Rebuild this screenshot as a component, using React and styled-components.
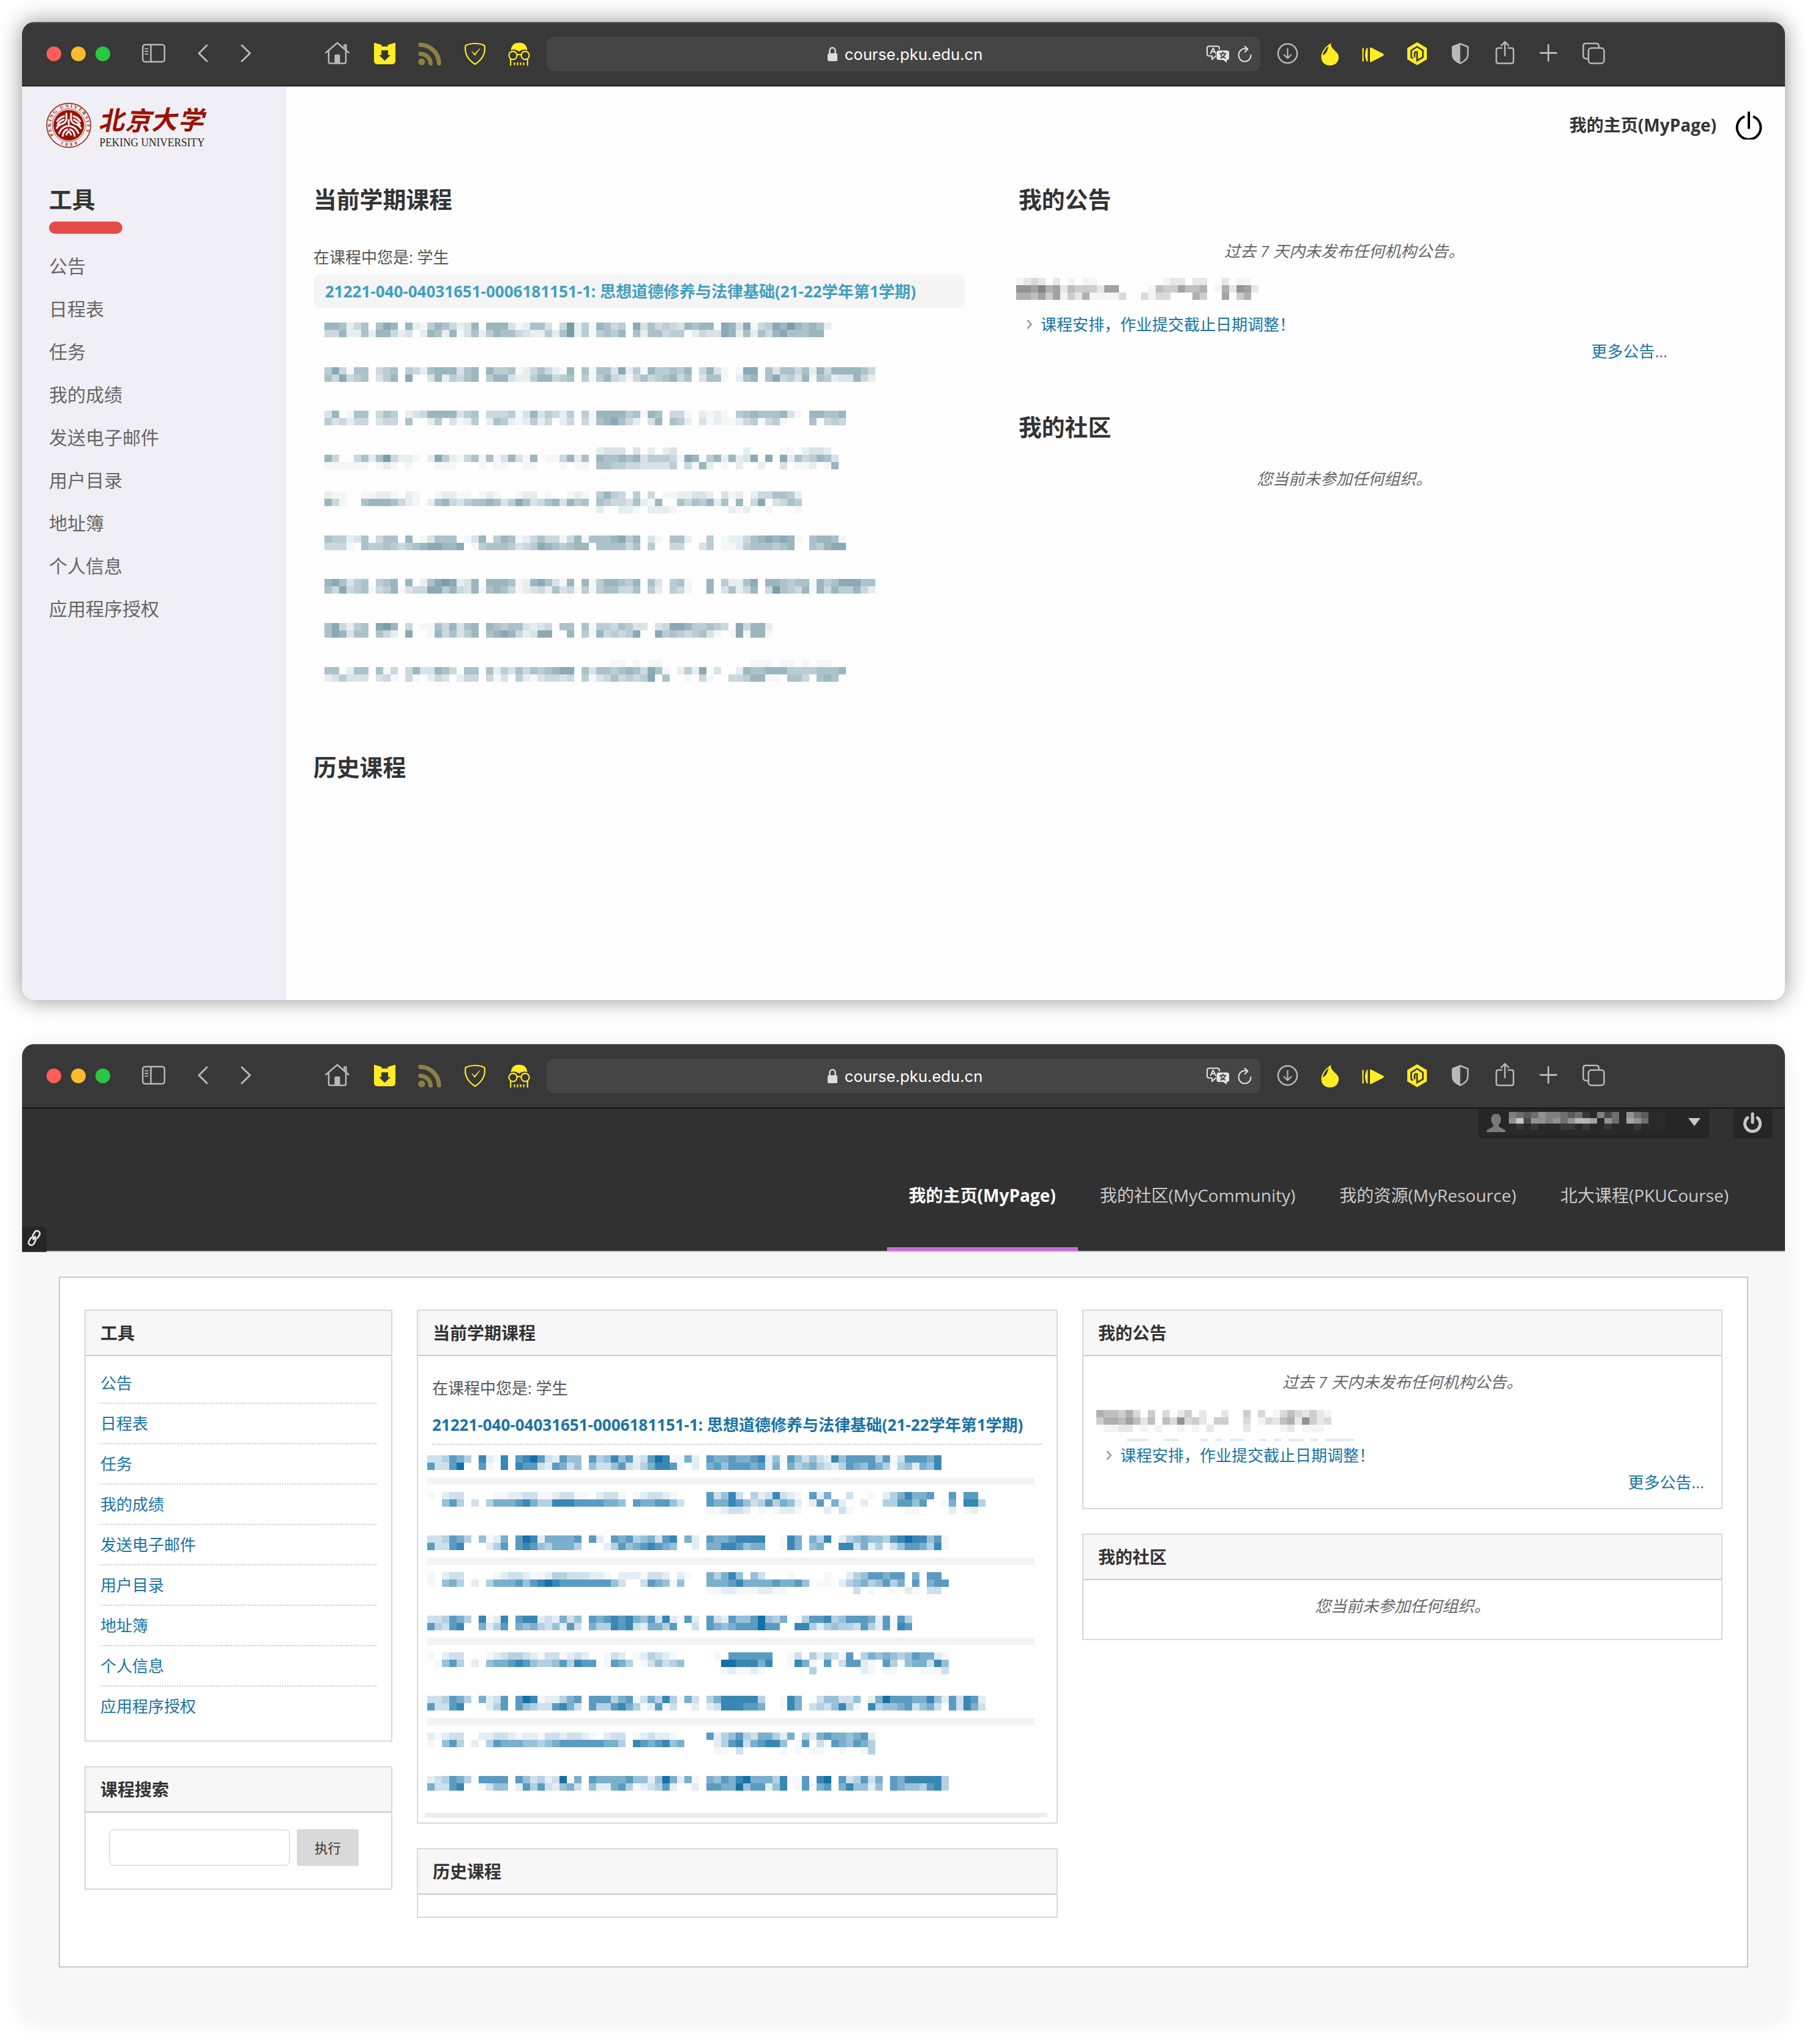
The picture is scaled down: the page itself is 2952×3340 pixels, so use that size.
import React from "react";
import styled, { createGlobalStyle, css } from "styled-components";

const SANS = `"Open Sans", "Noto Sans CJK SC", sans-serif`;

const GlobalStyle = createGlobalStyle`
  *, *::before, *::after { box-sizing: border-box; }
  body { margin: 0; background: #fff; font-family: ${SANS}; font-size: 26px; color: #555; }
  h1, h2, ul, p { margin: 0; padding: 0; }
  ul { list-style: none; }
  a { text-decoration: none; color: inherit; }
`;

/* ---------- windows ---------- */

const Desktop = styled.main`
  width: 2952px;
  height: 3340px;
  padding: 36px;
  display: flex;
  flex-direction: column;
  gap: 72px;
  overflow: hidden;
`;

const Window = styled.section`
  width: 2880px;
  height: 1598px;
  flex: none;
  display: flex;
  flex-direction: column;
  border-radius: 20px;
  overflow: hidden;
  background: ${(p) => p.$bg};
  box-shadow: 0 0 36px rgba(0, 0, 0, ${(p) => p.$shade});
`;

const Toolbar = styled.header`
  height: 106px;
  flex: none;
  display: flex;
  align-items: center;
  padding: 0 0 1px 40px;
  background: #383838;
  color: #b9b9b9;
  box-shadow: inset 0 2px 0 #505050;
  border-bottom: 1px solid ${(p) => p.$line};
  position: relative;
  &::after {
    content: "";
    position: absolute;
    left: 0;
    right: 0;
    bottom: 0;
    height: 1px;
    background: #000;
  }
`;

const Lights = styled.div`
  display: flex;
  gap: 16px;
`;

const Light = styled.span`
  width: 24px;
  height: 24px;
  border-radius: 50%;
  background: ${(p) => p.$color};
`;

const IconBox = styled.svg`
  display: block;
  flex: none;
  height: 48px;
  width: ${(p) => p.$w}px;
  margin-left: ${(p) => p.$gap || 0}px;
  fill: none;
  stroke: currentColor;
  stroke-width: 2.5;
  stroke-linecap: round;
  stroke-linejoin: round;
  overflow: visible;
`;

const AddressBar = styled.div`
  margin-left: 27px;
  width: 1166px;
  height: 56px;
  border-radius: 12px;
  background: #454545;
  color: #e6e6e6;
  display: grid;
  grid-template-columns: 1fr auto 1fr;
  align-items: center;
`;

const Address = styled.div`
  grid-column: 2;
  display: flex;
  align-items: center;
  gap: 11px;
  padding: 2px 0 0 4px;
  font: 400 25.6px/40px Inter, sans-serif;
  color: #fff;
`;

const AddressTools = styled.div`
  display: flex;
  justify-content: flex-end;
  padding-right: 14px;
`;

const Icon = ({ w, gap, children }) => (
  <IconBox $w={w} $gap={gap} viewBox={`0 0 ${w} 48`}>{children}</IconBox>
);

const YELLOW = "#ffec24";

const BrowserBar = ({ line }) => (
  <Toolbar $line={line}>
    <Lights>
      <Light $color="#ff5f57" />
      <Light $color="#febb2e" />
      <Light $color="#28c840" />
    </Lights>
    <Icon w={38} gap={52}>
      <rect x="1.2" y="9" width="35.6" height="28" rx="4" />
      <path d="M14.5 9V37" />
      <path d="M5 15.7h4.6M5 20h4.6M5 24.4h4.6" strokeWidth="1.8" />
    </Icon>
    <Icon w={17} gap={53}><path d="M15 10 2 23 15 36" strokeWidth="3" /></Icon>
    <Icon w={18} gap={53}><path d="M2 10 15.5 23 2 36" strokeWidth="3" /></Icon>
    <Icon w={40} gap={120}>
      <path d="M1.5 22 20 6 38.5 22" />
      <path d="M6 19v18q0 2.4 2.4 2.4h23.2q2.4 0 2.4-2.4V19" />
      <path d="M31.5 15V9.8h3V19" />
      <path d="M15.5 39V27q0-2 2-2h5q2 0 2 2v12z" fill="currentColor" stroke="none" />
    </Icon>
    <Icon w={35} gap={40}>
      <path fillRule="evenodd" fill={YELLOW} stroke="none" d="M0 5.7 12.5 9.3V12H22.5V9.3L35 5.7V35q0 6-6 6H6q-6 0-6-6zM12 18.3v7.7H8L17.5 35.3 27 26h-4V18.3z" />
    </Icon>
    <Icon w={38} gap={37}>
      <g stroke="#8a8145" strokeWidth="7">
        <path d="M3.8 24A17 17 0 0 1 20.5 39.5" />
        <path d="M3.8 9.3A31 31 0 0 1 34.2 39.5" />
      </g>
      <circle cx="5.8" cy="37" r="5.6" fill="#8a8145" stroke="none" />
    </Icon>
    <Icon w={36} gap={37}>
      <g stroke={YELLOW} strokeWidth="2.2">
        <path d="M18 7Q9 7 2.5 10.5Q-.5 29 18 41Q36.5 29 33.5 10.5Q27 7 18 7z" />
        <path d="m13 20.5 4.6 6L26 15.5l-8.4 8.4z" fill={YELLOW} strokeWidth="1" />
      </g>
    </Icon>
    <Icon w={36} gap={36}>
      <g stroke={YELLOW} strokeWidth="2.2">
        <path d="M4.5 18Q6 5.7 18 5.7T31.5 18Q25 15.5 18 20 11 15.5 4.5 18z" fill={YELLOW} stroke="none" />
        <circle cx="8" cy="26.5" r="6.6" />
        <circle cx="28" cy="26.5" r="6.6" />
        <path d="M14.5 26q3.5-2 7 0M4.2 33v9.5M31.8 33v9.5" />
        <path d="M10.5 38v4.5M15.5 38v4.5M20.5 38v4.5M25.5 38v4.5" strokeLinecap="butt" />
      </g>
    </Icon>
    <AddressBar>
      <Address>
        <IconBox $w={18} viewBox="0 0 18 48">
          <rect x="1" y="22" width="16" height="13" rx="2.5" fill="#dcdcdc" stroke="none" />
          <path d="M4.5 22V17.5a4.5 4.5 0 0 1 9 0V22" stroke="#dcdcdc" />
        </IconBox>
        <span>course.pku.edu.cn</span>
      </Address>
      <AddressTools>
        <Icon w={38}>
          <path d="M15 27.5 9 33v-5.5H4.5Q1 27.5 1 24V15q0-3.5 3.5-3.5h13Q21 11.5 21 15v1" strokeWidth="2" />
          <path d="M6.5 23.5 10.8 14.5 15 23.5M8 20.5h5.5" strokeWidth="1.8" />
          <path d="M20 18.5h13.5q3.5 0 3.5 3.5v8.5q0 3.5-3.5 3.5H33v4.5L27.5 34H20q-3.5 0-3.5-3.5V22q0-3.5 3.5-3.5z" fill="currentColor" stroke="none" />
          <path d="M22 23.5h9.5M26.7 21.3v2M23.5 25.2q2 4.5 7 5.5M30 25.2q-2 4.5-7 5.5" stroke="#454545" strokeWidth="1.9" />
        </Icon>
        <Icon w={22} gap={14}>
          <path d="M12.5 15.8A10 10.5 0 1 0 20.5 26M10.5 11.7l4.8 4.5-4.5 4.6" strokeWidth="2" />
        </Icon>
      </AddressTools>
    </AddressBar>
    <Icon w={35} gap={27}>
      <circle cx="17.5" cy="23.3" r="15.6" />
      <path d="M17.5 15.5v15.5M11.8 25.5l5.7 5.7 5.7-5.7" strokeWidth="2.2" />
    </Icon>
    <Icon w={30} gap={37}>
      <path d="M16.3 5.5C14 10 .5 16 .5 29.5.5 38 7 43 14.8 43S29 38 29 29C29 19.5 14.5 17 16.3 5.5z" fill={YELLOW} stroke="none" />
      <path d="M14 9C7 14 2.5 20 1.8 27.5q5-1 8-6 2.5-5 4.2-12.5z" fill="#383838" stroke={YELLOW} strokeWidth="1.6" />
    </Icon>
    <Icon w={37} gap={37}>
      <path d="M.5 14.5h2.5q-1 11 0 22H.5zM9.5 14.5v22H7.5Q2.5 25.500 7.5 14.5zM13 14q1-1 2.5 0L35 24q1.8 1.5 0 3L15.5 37q-1.5 1-2.5 0z" fill={YELLOW} stroke="none" />
    </Icon>
    <Icon w={34} gap={36}>
      <path d="M17 5 33 14.5v18.5L17 42.5 1 33V14.5z" fill={YELLOW} stroke="none" />
      <path d="M10.5 31.5 7.5 29.5V18.5L17 12.5l9.5 6v11L17 35V21q-4-1-4 2.5v6" stroke="#383838" strokeWidth="2.6" strokeLinecap="butt" strokeLinejoin="miter" />
    </Icon>
    <Icon w={29} gap={39}>
      <path d="M14.5 7.5 27 12.5V25q0 9-12.5 14.5Q2 34 2 25V12.5z" />
      <path d="M14.5 6.5v34Q1 35 1 25V12z" fill="currentColor" stroke="none" />
    </Icon>
    <Icon w={31} gap={43}>
      <path d="M10 14.5H4.5q-3 0-3 3v19q0 3 3 3h22q3 0 3-3v-19q0-3-3-3H21" />
      <path d="M15.5 27V4.5M9.5 10.3l6-6 6 6" />
    </Icon>
    <Icon w={29} gap={41}><path d="M1.5 22.5h26M14.5 9.5v26" strokeWidth="2.8" /></Icon>
    <Icon w={37} gap={41}>
      <path d="M8 32H5.5q-4-1-4-5V11q0-4 4-4h17q4 0 4.5 4v2" />
      <rect x="10" y="14.5" width="25.5" height="25" rx="4.5" />
    </Icon>
  </Toolbar>
);

/* ---------- pixelated, censored text ---------- */

const PALETTES = {
  teal: { dark: [122, 157, 170], light: [255, 255, 255], gamma: 1.15 },
  blue: { dark: [20, 113, 168], light: [255, 255, 255], gamma: 1.4 },
  gray: { dark: [132, 132, 132], light: [255, 255, 255], gamma: 1.1 },
  night: { dark: [200, 200, 200], light: [38, 38, 38], gamma: 1 },
};

const MosaicSvg = styled.svg`
  display: block;
  flex: none;
  margin-top: ${(p) => p.$top || 0}px;
  margin-left: ${(p) => p.$left || 0}px;
  shape-rendering: crispEdges;
`;

const Mosaic = ({ rows, tone, top, left, size = 12 }) => {
  const { dark, light, gamma } = PALETTES[tone];
  const cols = Math.max(...rows.map((r) => r.length));
  const mix = (v) => dark.map((d, i) => Math.round(light[i] + (d - light[i]) * Math.pow(v / 9, gamma))).join(",");
  return (
    <MosaicSvg $top={top} $left={left} width={cols * 12} height={rows.length * size}>
      {rows.flatMap((row, y) =>
        [...row].map((c, x) =>
          c > "0" ? <rect key={`${x}-${y}`} x={x * 12} y={y * size} width="12" height={size} fill={`rgb(${mix(+c)})`} /> : null
        )
      )}
    </MosaicSvg>
  );
};

/* Each row is "course id | course name"; the name starts at a fixed column. */
const joinRows = (nameColumn, length, rows) =>
  rows.map((row) => {
    const [id, name] = row.split("|");
    return (id.padEnd(nameColumn, "0").slice(0, nameColumn) + name).slice(0, length);
  });

const TEAL_LINES = [
  [527, 69, [
    "7762460687072157642370777312663049251|76450836454376770873814587976762",
    "4472262774230276271362576643225269251|56570626645502433872626478666770",
  ]],
  [600, 75, [
    "5841660456054267773670755612464217061|66382517556570473101880636646274777764",
    "6484560357080037254670577322577456051|57431464567460366102670684537165233742",
  ]],
  [671, 71, [
    "3701660465023477773560444513735425051|7777561760441021210567666731077667",
    "5342440344060025031250265212524024041|6786420370652031211245145100060454",
  ]],
  [731, 70, [
    "0|23330302023000000000200001102332",
    "7400462694221028521461613731701147260|766767355541870572723808082645763",
    "1111110121010001110001011001100010110|665544333350417201020020030112017",
  ]],
  [803, 65, [
    "2110011221021001221101210012201001210|5754050401122332031202446652",
    "7410067776421026743566763586346737560|6544362170064657260704803465657",
    "0|2002210222100000002120010001134",
  ]],
  [875, 71, [
    "6552360466070136660137057612464414716|6678570310662005012246787871067761",
    "4441065565456788778015666534587656770|6666460500440035011256665670065788",
  ]],
  [946, 75, [
    "7863560567070268982370777612786317071|57765706305610070522680776566175688866",
    "6484561457134488574371676412342634151|56644605205410070362470496547174755742",
  ]],
  [1018, 61, [
    "6842560897040116473670765663234066061|554653303488755654084772",
    "6873660642080017463570678742388007051|745458008565456310181771",
  ]],
  [1078, 71, [
    "0|0011010110000000000001110110101100",
    "6602660614047337640660625364656788063|6656764861025280300276677755556667",
    "2353330341041024302440413052134434051|3464545806001041004457711066406760",
  ]],
].map(([y, length, rows]) => ({ y, rows: joinRows(37, length, rows) }));

const BLUE_EVEN = [
  [70, [
    "33476408218078973275507458572379811620|76676678251753532857777471377768",
    "73379007108087732763505335732468871020|67577767260645643247657641452658",
  ]],
  [71, [
    "33476405126079826666707207674563780620|766788880018606480245655478988571",
    "73378000247078754666400024756787650020|668875660018605600883624135776481",
  ]],
  [66, [
    "33476408128078823263507678786573821720|7327557954601477845777627174",
    "74378006247065643527306448783266470030|7656777977008842454437427187",
  ]],
  [76, [
    "33476406237079812246707774671364841630|46888884001860035533502697776685273872",
    "73378000247075433786307447864127130020|23888776001860343584108455673563073863",
  ]],
  [71, [
    "23476407777075342391607666675525962610|657689666481170890734736076888884",
    "63378001355027473256305226741234720020|776695772580171670685525076554784",
  ]],
].map(([length, rows]) => joinRows(38, length, rows));

const BLUE_ODD = [
  [76, [
    "1023300001122331123311023310123321|73583042383210726003001024686670070770",
    "0057403046667864488877776650766775300|76687534746520270620020044775700160884",
    "0|11233201012210002031000000011000020120",
  ]],
  [71, [
    "1023300001233211244333221022213320210|646850530001000010024577677060770",
    "1056402046667578987777777530037651500|666786666766750110245645746070677",
    "0|112211122110000000003010010210330",
  ]],
  [71, [
    "1023300012344321331232001320124321000|010777777001304243170465654576621",
    "0157402056678754457487701764013534500|009988868001861070377210741566385",
    "0|001211210000004000000210110001113",
  ]],
  [61, [
    "2123300223321221332332102330123221000|72457436642604267665672",
    "1057402047666554567777776640876785600|02478367885017031765764",
    "0|01103000001010110010014",
  ]],
].map(([length, rows]) => joinRows(38, length, rows));

const NOTICE_TOP = [
  "123202010110000000001220220020110",
  "887967254442770000154475560162872",
  "665747142611113003133000640070460",
];
const NOTICE_BOTTOM = [
  "65546304030240200200403013532421",
  "46657525053834204400301325628423",
  "01122010100101020000200001201110",
];

/* ---------- crest ---------- */

const LogoLink = styled.a`
  display: block;
  width: 262px;
  height: 76px;
  margin-left: 39px;
  color: #9b1100;
`;

const LogoSvg = styled.svg`
  display: block;
  fill: none;
  stroke: currentColor;
  overflow: visible;
`;

const LogoText = styled.text`
  stroke: none;
  fill: ${(p) => p.$fill || "#9b1100"};
  font-family: "Liberation Serif", "Noto Sans CJK SC", serif;
  font-size: ${(p) => p.$size}px;
  font-weight: ${(p) => p.$weight || 400};
`;

const PkuLogo = () => (
  <LogoLink href="#">
    <LogoSvg width="262" height="76" viewBox="0 0 262 76">
      <circle cx="37.3" cy="37.7" r="36" strokeWidth="1.4" />
      <circle cx="37.3" cy="37.7" r="27" strokeWidth=".8" />
      <circle cx="37.3" cy="37.7" r="25" fill="currentColor" stroke="none" />
      <g stroke="#f0eff5" strokeWidth="3" strokeLinecap="round" strokeLinejoin="round">
        <path d="M33.5 18.5v9Q33.5 34 24 36.5 20 38 17.5 42.5M41 18.5v9Q41 34 50.5 36.5 54.5 38 57 42.5" />
        <path d="M37.3 29v10" />
        <path d="M29.5 23Q22 25 18.5 31M45 23Q52.5 25 56 31" />
        <path d="M29 28.5Q23 30.5 19 36.5M45.5 28.5Q51.5 30.5 55.5 36.5" />
        <path d="M34.5 39Q25 41 21.5 50.5M40 39Q49.5 41 53 50.5" />
        <path d="M35 44.5Q28.5 46.5 27.5 55M39.5 44.5Q46 46.5 47 55" />
        <path d="M37.3 47.5Q34.5 50 33.5 53M37.3 47.5Q40 50 41 53" />
      </g>
      <path id="crest-top" d="M14.5 56.5A29.5 29.5 0 1 1 60.5 56.5" stroke="none" />
      <path id="crest-foot" d="M20 66.5Q37.5 77 55 66.5" stroke="none" />
      <LogoText $size={7.8} $weight={700}>
        <textPath href="#crest-top" startOffset="3" textLength="120">PEKING UNIVERSITY</textPath>
      </LogoText>
      <LogoText $size={7.5} $weight={700}>
        <textPath href="#crest-foot" startOffset="4" textLength="29">1898</textPath>
      </LogoText>
      <g transform="translate(86 45) skewX(-14)">
        <LogoText $size={42} $weight={700} x="0 43 86 129" y="1 0 0 -1" rotate="-3 2 -3 2">北京大学</LogoText>
      </g>
      <LogoText $size={18.5} $fill="#2c2220" x="87.5" y="71.5" textLength="172" lengthAdjust="spacingAndGlyphs">PEKING UNIVERSITY</LogoText>
    </LogoSvg>
  </LogoLink>
);

/* ---------- first window: refreshed portal ---------- */

const Portal = styled.div`
  flex: 1;
  display: grid;
  grid-template-columns: 432px 1fr;
`;

const Side = styled.aside`
  background: #f0eff5;
  padding-top: 25px;
`;

const BigTitle = styled.h2`
  font-size: 37.8px;
  line-height: 52px;
  height: 52px;
  font-weight: 700;
  color: #333;
  margin-top: ${(p) => p.$top || 0}px;
`;

const ToolNav = styled.nav`
  padding: 57px 44px 0;
`;

const RedBar = styled.div`
  width: 120px;
  height: 20px;
  margin: 10px 0 18px;
  border-radius: 10px;
  background: #e54c47;
`;

const ToolLink = styled.a`
  display: block;
  font-size: 30px;
  line-height: 70px;
  height: 70px;
  color: #666;
`;

const PortalMain = styled.div`
  padding: 41px 37px 0 44px;
  display: flex;
  flex-direction: column;
`;

const PortalTop = styled.div`
  height: 44px;
  display: flex;
  justify-content: flex-end;
  align-items: center;
  gap: 31px;
`;

const HomeLink = styled.a`
  font-size: 28px;
  line-height: 42px;
  height: 44px;
  font-weight: 700;
  color: #333;
`;

const PowerSvg = styled.svg`
  display: block;
  fill: none;
  stroke-linecap: round;
`;

const PortalColumns = styled.div`
  display: grid;
  grid-template-columns: 1064px 1064px;
  gap: 88px;
  padding-top: 73px;
`;

const Plain = styled.p`
  height: 40px;
  line-height: 40px;
  color: #555;
  margin-top: ${(p) => p.$top || 0}px;
`;

const Muted = styled(Plain)`
  font-style: italic;
  text-align: center;
  color: #666;
`;

const CoursePill = styled.a`
  display: block;
  height: 56px;
  margin-top: 8px;
  padding-left: 19px;
  border-radius: 12px;
  background: #f5f5f5;
  color: #419fbf;
  font-weight: 700;
  line-height: 57px;
  white-space: nowrap;
`;

const NoticeLink = styled.a`
  display: flex;
  align-items: center;
  height: 40px;
  line-height: 40px;
  color: #1a73a3;
  margin-top: ${(p) => p.$top}px;
  padding-left: 13px;
  gap: 13px;
`;

const MoreLink = styled.a`
  display: block;
  text-align: right;
  height: 40px;
  line-height: 40px;
  color: #1a73a3;
  margin-top: ${(p) => p.$top}px;
  padding-right: ${(p) => p.$right}px;
`;

const Caret = () => (
  <svg width="10" height="16" viewBox="0 0 10 16" fill="none" stroke="#999" strokeWidth="2.6"><path d="M1.5 1 7.5 8 1.5 15" /></svg>
);

const COURSE = "21221-040-04031651-0006181151-1: 思想道德修养与法律基础(21-22学年第1学期)";
const TOOLS = ["公告", "日程表", "任务", "我的成绩", "发送电子邮件", "用户目录", "地址簿", "个人信息", "应用程序授权"];

const tealLines = TEAL_LINES.map((line, i) => {
  const prev = TEAL_LINES[i - 1];
  const end = prev ? prev.y + prev.rows.length * 12 : 504;
  return { ...line, top: line.y - end };
});

const PortalPage = () => (
  <Portal>
    <Side>
      <PkuLogo />
      <ToolNav>
        <BigTitle>工具</BigTitle>
        <RedBar />
        {TOOLS.map((t) => <ToolLink href="#" key={t}>{t}</ToolLink>)}
      </ToolNav>
    </Side>
    <PortalMain>
      <PortalTop>
        <HomeLink href="#">我的主页(MyPage)</HomeLink>
        <PowerSvg width="44" height="46" viewBox="0 0 44 46" stroke="#000" strokeWidth="4">
          <path d="M13.5 9A19.3 19.3 0 1 0 30.5 9M22 2v25" />
        </PowerSvg>
      </PortalTop>
      <PortalColumns>
        <div>
          <BigTitle>当前学期课程</BigTitle>
          <Plain $top={48}>在课程中您是: 学生</Plain>
          <CoursePill href="#">{COURSE}</CoursePill>
          {tealLines.map((l) => <Mosaic key={l.y} tone="teal" rows={l.rows} top={l.top} left={18} />)}
          <BigTitle $top={114}>历史课程</BigTitle>
        </div>
        <div>
          <BigTitle>我的公告</BigTitle>
          <Muted $top={38}>过去 7 天内未发布任何机构公告。</Muted>
          <Mosaic tone="gray" rows={NOTICE_TOP} top={24} left={-4} />
          <NoticeLink href="#" $top={20}><Caret />课程安排，作业提交截止日期调整！</NoticeLink>
          <MoreLink href="#" $top={4} $right={4}>更多公告...</MoreLink>
          <BigTitle $top={78}>我的社区</BigTitle>
          <Muted $top={38}>您当前未参加任何组织。</Muted>
        </div>
      </PortalColumns>
    </PortalMain>
  </Portal>
);

/* ---------- second window: classic portal ---------- */

const Masthead = styled.div`
  height: 234px;
  flex: none;
  display: flex;
  flex-direction: column;
  align-items: flex-end;
  justify-content: space-between;
  background: #313131;
  border-bottom: 2px solid #c9c9c9;
  position: relative;
`;

const Account = styled.div`
  display: flex;
  gap: 40px;
  padding-right: 20px;
`;

const UserMenu = styled.div`
  width: 376px;
  height: 48px;
  display: flex;
  align-items: flex-start;
  padding: 5px 14px 0 12px;
  background: #262626;
`;

const UserName = styled.div`
  width: 256px;
  height: 36px;
  margin-left: 5px;
  background: #292929;
`;

const Arrow = styled.span`
  margin: 10px 0 0 auto;
  border: 10px solid transparent;
  border-top: 13px solid #c8c8c8;
  border-bottom: 0;
`;

const PowerBox = styled.div`
  width: 64px;
  height: 48px;
  display: grid;
  place-items: center;
  padding: 0 2px 3px 0;
  background: #262626;
`;

const Tabs = styled.nav`
  display: flex;
  padding-right: 56px;
`;

const Tab = styled.a`
  height: 112px;
  padding: 0 36px;
  font-size: 28px;
  line-height: 42px;
  color: #cacaca;
  white-space: nowrap;
  ${(p) => p.$active && css`
    color: #fff;
    font-weight: 700;
    border-bottom: 6px solid #c76bd7;
  `}
`;

const LinkBadge = styled.div`
  position: absolute;
  left: 0;
  bottom: -2px;
  width: 40px;
  height: 42px;
  border-radius: 0 6px 0 0;
  background: rgba(36, 36, 36, .88);
  display: grid;
  place-items: center;
  padding-bottom: 4px;
`;

const Sheet = styled.div`
  width: 2760px;
  height: 1129px;
  margin: 40px 0 0 60px;
  padding: 52px 40px 0;
  border: 2px solid #c9c9c9;
  background: #fff;
  display: grid;
  grid-template-columns: 503px 1047px 1046px;
  gap: 40px;
  align-items: start;
`;

const Column = styled.div`
  display: flex;
  flex-direction: column;
  gap: 40px;
`;

const Panel = styled.section`
  height: ${(p) => p.$h}px;
  border: 2px solid #d9d9d9;
  background: #fff;
`;

const PanelTitle = styled.h2`
  height: 74px;
  padding-left: 24px;
  border-bottom: 2px solid #c9c9c9;
  background: #f7f7f7;
  color: #333;
  font-size: 28px;
  line-height: 72px;
  font-weight: 700;
`;

const PanelBody = styled.div`
  padding: ${(p) => p.$pad};
`;

const ToolRow = styled.li`
  height: 66px;
  line-height: 64px;
  color: #1a73a3;
  border-bottom: 2px dotted #c9c9c9;
  &:last-child { border-bottom-color: transparent; }
`;

const CourseLink = styled.a`
  display: block;
  height: 53px;
  margin-top: 20px;
  line-height: 40px;
  font-weight: 700;
  color: #1a73a3;
  white-space: nowrap;
  border-bottom: 2px dotted #c9c9c9;
`;

const GrayBar = styled.div`
  width: ${(p) => p.$w}px;
  height: ${(p) => p.$h}px;
  margin: ${(p) => p.$top}px 0 0 ${(p) => p.$left}px;
  background: ${(p) => p.$bg};
`;

const SearchForm = styled.div`
  display: flex;
  gap: 11px;
  align-items: center;
`;

const SearchInput = styled.input`
  width: 296px;
  height: 60px;
  border: 2px solid #e4e4e4;
  border-radius: 8px;
  background: #fff;
`;

const SearchButton = styled.button`
  width: 101px;
  height: 60px;
  margin-top: 1px;
  padding: 0;
  border: 0;
  border-radius: 3px;
  background: #d9d9d9;
  color: #333;
  font: 400 21.5px/59px ${SANS};
`;

const FaintRow = styled.div`
  display: flex;
  margin: 11px 0 0 35px;
`;

const FaintCell = styled.span`
  width: 12px;
  height: 4px;
  background: ${(p) => (p.$on ? "#dfeaf1" : "transparent")};
`;

const FAINT = "01110011000101011001010110101111";

const ClassicPage = () => (
  <>
    <Masthead>
      <Account>
        <UserMenu>
          <svg width="32" height="34" viewBox="0 0 32 34" fill="#787878">
            <path d="M16 3c5 0 8 3.5 8 9 0 4-1.5 7-3.5 9v3l9.5 5q1.5 1 1.5 4H.5q0-3 1.5-4l9.5-5v-3C9.5 19 8 16 8 12c0-5.5 3-9 8-9z" />
          </svg>
          <UserName>
            <Mosaic tone="night" rows={["5434655434105240643", "6926656468870640764", "0101000110100100010"]} size={9.5} />
          </UserName>
          <Arrow />
        </UserMenu>
        <PowerBox>
          <PowerSvg width="34" height="36" viewBox="0 0 34 36" stroke="#c8c8c8" strokeWidth="5">
            <path d="M9 9.5a12.5 12.5 0 1 0 16 0M17 3v14" />
          </PowerSvg>
        </PowerBox>
      </Account>
      <Tabs>
        <Tab href="#" $active>我的主页(MyPage)</Tab>
        <Tab href="#">我的社区(MyCommunity)</Tab>
        <Tab href="#">我的资源(MyResource)</Tab>
        <Tab href="#">北大课程(PKUCourse)</Tab>
      </Tabs>
      <LinkBadge>
        <svg width="26" height="28" viewBox="0 0 26 28" fill="none" stroke="#e6e6e6" strokeWidth="2.8">
          <rect x="12" y="2" width="9" height="13.5" rx="4.5" transform="rotate(30 16.5 8.5)" />
          <rect x="5" y="12.5" width="9" height="13.5" rx="4.5" transform="rotate(30 9.5 19)" />
          <path d="m10.5 17 5-6" />
        </svg>
      </LinkBadge>
    </Masthead>
    <Sheet>
      <Column>
        <Panel $h={706}>
          <PanelTitle>工具</PanelTitle>
          <PanelBody $pad="12px 24px 0">
            <ul>{TOOLS.map((t) => <ToolRow key={t}><a href="#">{t}</a></ToolRow>)}</ul>
          </PanelBody>
        </Panel>
        <Panel $h={202}>
          <PanelTitle>课程搜索</PanelTitle>
          <PanelBody $pad="26px 0 0 38px">
            <SearchForm>
              <SearchInput />
              <SearchButton>执行</SearchButton>
            </SearchForm>
          </PanelBody>
        </Panel>
      </Column>
      <Column>
        <Panel $h={840}>
          <PanelTitle>当前学期课程</PanelTitle>
          <PanelBody $pad="32px 24px 0 23px">
            <Plain>在课程中您是: 学生</Plain>
            <CourseLink href="#">{COURSE}</CourseLink>
            {BLUE_EVEN.map((rows, i) => (
              <React.Fragment key={i}>
                <Mosaic tone="blue" rows={rows} top={i ? 35 : 17} left={-8} />
                {BLUE_ODD[i] && (
                  <>
                    <GrayBar $w={992} $h={12} $top={12} $left={-8} $bg="#f3f3f3" />
                    <Mosaic tone="blue" rows={BLUE_ODD[i]} top={12} left={-8} />
                  </>
                )}
              </React.Fragment>
            ))}
            <GrayBar $w={1017} $h={8} $top={36} $left={-12} $bg="#ededed" />
          </PanelBody>
        </Panel>
        <Panel $h={114}>
          <PanelTitle>历史课程</PanelTitle>
        </Panel>
      </Column>
      <Column>
        <Panel $h={326}>
          <PanelTitle>我的公告</PanelTitle>
          <PanelBody $pad="22px 24px 0">
            <Muted>过去 7 天内未发布任何机构公告。</Muted>
            <Mosaic tone="gray" rows={NOTICE_BOTTOM} top={26} left={-3} />
            <FaintRow>{[...FAINT].map((c, i) => <FaintCell key={i} $on={c === "1"} />)}</FaintRow>
            <NoticeLink href="#" $top={3}><Caret />课程安排，作业提交截止日期调整！</NoticeLink>
            <MoreLink href="#" $top={4} $right={4}>更多公告...</MoreLink>
          </PanelBody>
        </Panel>
        <Panel $h={174}>
          <PanelTitle>我的社区</PanelTitle>
          <PanelBody $pad="22px 24px 0">
            <Muted>您当前未参加任何组织。</Muted>
          </PanelBody>
        </Panel>
      </Column>
    </Sheet>
  </>
);

export default function App() {
  return (
    <>
      <GlobalStyle />
      <Desktop>
        <Window $bg="#fefefe" $shade={0.44}>
          <BrowserBar line="#bdbdbd" />
          <PortalPage />
        </Window>
        <Window $bg="#f7f7f7" $shade={0.07}>
          <BrowserBar line="#2a2a2a" />
          <ClassicPage />
        </Window>
      </Desktop>
    </>
  );
}
